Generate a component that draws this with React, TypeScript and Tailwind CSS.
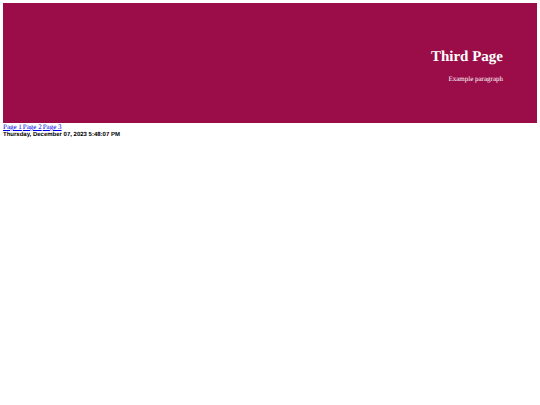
const links = [
  { href: '#page-1', label: 'Page 1' },
  { href: '#page-2', label: 'Page 2' },
  { href: '#page-3', label: 'Page 3' },
];

const Header = () => (
  <header className="bg-[#9a0d48] px-[34px] pt-10 pb-[39px] text-right text-white">
    <h1 className="text-[15px] leading-[28px] font-bold">Third Page</h1>
    <p className="mt-[3px] text-[7px] leading-[10px]">Example paragraph</p>
  </header>
);

const Nav = () => (
  <nav className="flex gap-px text-[7px] leading-[8px]">
    {links.map(({ href, label }) => (
      <a key={href} href={href} className="text-[#0000ee] underline">
        {label}
      </a>
    ))}
  </nav>
);

export default function App() {
  return (
    <div className="p-[3px] font-['Liberation_Serif',serif] [text-rendering:geometricPrecision]">
      <Header />
      <Nav />
      <p className="font-['Liberation_Sans',sans-serif] text-[6px] leading-[8px] font-bold text-black">
        Thursday, December 07, 2023 5:48:07 PM
      </p>
    </div>
  );
}
